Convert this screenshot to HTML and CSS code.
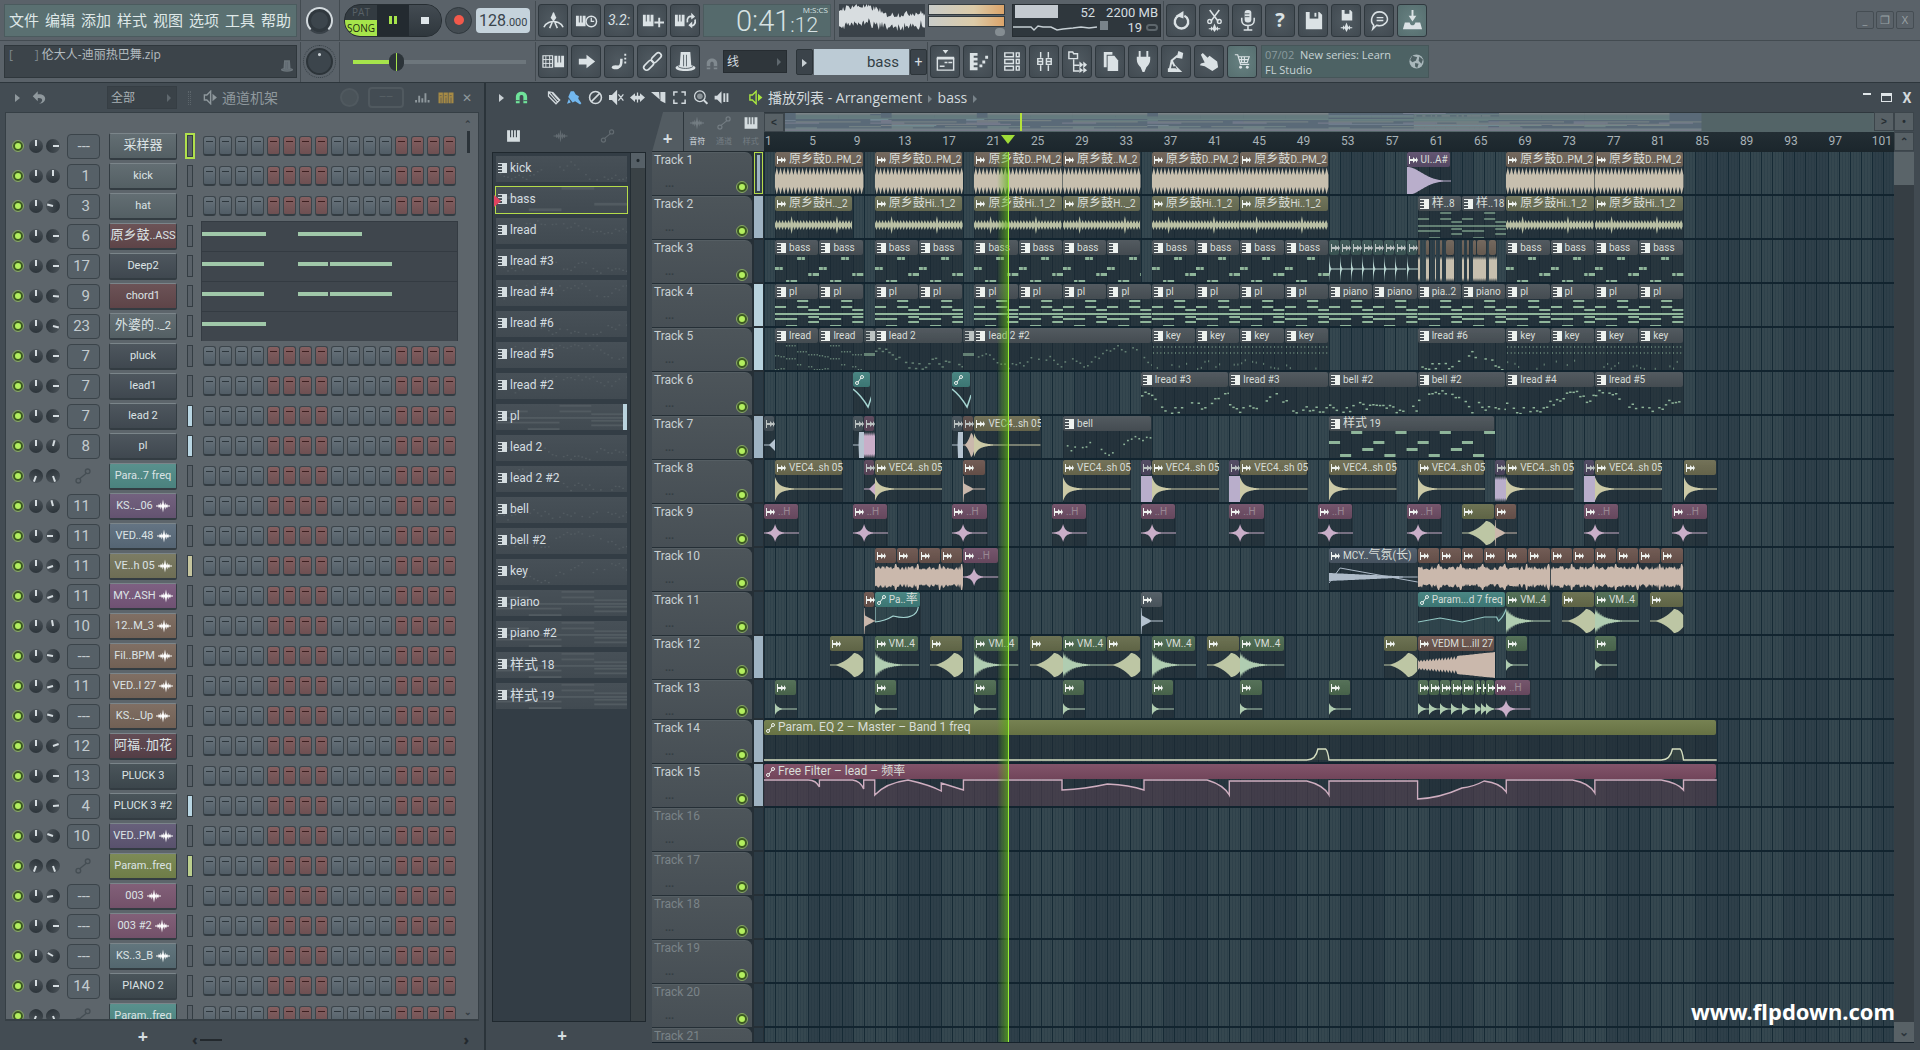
FILE: index.html
```html
<!DOCTYPE html>
<html lang="zh-CN">
<head>
<meta charset="utf-8">
<title>伦大人-迪丽热巴舞.zip</title>
<link rel="stylesheet" href="styles.css">
</head>
<body>
<svg class="defs" aria-hidden="true">
  <symbol id="metro" viewBox="0 0 24 24"><path d="M12 4v9M12 13C10 13 4 14 2 19M12 13c2 0 8 1 10 6M11 13l-3 7M13 13l3 7" fill="none" stroke="currentColor" stroke-width="1.6"/><path d="M9 9l3-6 3 6-3 4z"/></symbol>
  <symbol id="keysclock" viewBox="0 0 24 24"><path d="M1 7h3v7h1V7h2v7h1V7h3v11H1z"/><circle cx="17" cy="13" r="5.500" fill="none" stroke="currentColor" stroke-width="1.5"/><path d="M17 9v4h3" fill="none" stroke="currentColor" stroke-width="1.300"/></symbol>
  <symbol id="keysplus" viewBox="0 0 24 24"><path d="M2 6h3v7h1V6h3v7h1V6h3v12H2zM18 9h2v4h4v2h-4v4h-2v-4h-4v-2h4z"/></symbol>
  <symbol id="keysloop" viewBox="0 0 24 24"><path d="M1 6h3v7h1V6h2v7h1V6h3v12H1z"/><path d="M14 14c-1-5 2-7 5-6m3 3c1 5-2 7-5 6" fill="none" stroke="currentColor" stroke-width="1.8"/><path d="M18 4l4 4-4 3zM19 20l-4-3 4-4z"/></symbol>
  <symbol id="typing" viewBox="0 0 24 24"><path d="M1 6h10v12H1z" fill="none" stroke="currentColor" stroke-width="1.3"/><path d="M1 10h10M1 14h10M4 6v12M8 6v12" stroke="currentColor"/><path d="M13 6h3v7h1V6h2v7h1V6h3v12H13z"/></symbol>
  <symbol id="arrow" viewBox="0 0 24 24"><path d="M4 9h8V5l9 7-9 7v-4H4z"/></symbol>
  <symbol id="slide" viewBox="0 0 24 24"><ellipse cx="8" cy="18" rx="4" ry="2.200"/><path d="M9 18c5 0 5-4 5-9" fill="none" stroke="currentColor" stroke-width="2.600"/><path d="M18 4v10" stroke="currentColor" stroke-width="2" stroke-dasharray="2 2"/></symbol>
  <symbol id="link" viewBox="0 0 24 24"><g fill="none" stroke="currentColor" stroke-width="1.700"><rect x="10" y="5" width="12" height="6" rx="3" transform="rotate(-45 16 8)"/><rect x="2" y="13" width="12" height="6" rx="3" transform="rotate(-45 8 16)"/></g></symbol>
  <symbol id="hat" viewBox="0 0 24 24"><path d="M7 2h10l1 14c7 1 6 6-6 6S-1 17 6 16z"/><path d="M10 5v12M13 5v12M4 17c3 3 13 3 16 0" fill="none" stroke="#59636a"/></symbol>
  <symbol id="magnet" viewBox="0 0 24 24"><path d="M3 21V11C3 0 21 0 21 11v10h-6V11c0-4-6-4-6 0v10z"/><path d="M3 17h6M15 17h6" stroke="#434c53" stroke-width="1.500"/></symbol>
  <symbol id="plist" viewBox="0 0 24 24"><path d="M9 0h6l-3 4zM3 7h18v3H3z"/><path d="M3.500 8v13h17V8M6 17h5M11 13h3M15 13h4" fill="none" stroke="currentColor" stroke-width="1.500"/></symbol>
  <symbol id="proll" viewBox="0 0 24 24"><path d="M3 3h8v3H7v2h4v3H7v2h4v3H7v2h4v3H3zM13 15h3v3h-3zM16 11h3v3h-3zM19 6h3v3h-3z"/></symbol>
  <symbol id="crack" viewBox="0 0 24 24"><path d="M5 3h9v4H5zM5 10h9v4H5zM5 17h9v4H5zM17 3h3v4h-3zM17 10h3v4h-3zM17 17h3v4h-3z" fill="none" stroke="currentColor" stroke-width="1.500"/></symbol>
  <symbol id="mixer" viewBox="0 0 24 24"><path d="M8 2v6M8 16v6M16 2v6M16 16v6M5 9h5v6H5zM14 9h5v6h-5zM5 12h5M14 12h5" fill="none" stroke="currentColor" stroke-width="1.500"/></symbol>
  <symbol id="browser" viewBox="0 0 24 24"><path d="M3 2h4l1 2h4v5H3zM8 10v12h6M8 16h6" fill="none" stroke="currentColor" stroke-width="1.500"/><path d="M14 12v7l4-3.500zM14 18v6l4-3zM18 12v7l4-3.500zM18 18v6l4-3z"/></symbol>
  <symbol id="copy" viewBox="0 0 24 24"><path d="M5 2h9v3H8v13H5z"/><path d="M9 6h7l4 5v11H9z"/></symbol>
  <symbol id="plug" viewBox="0 0 24 24"><path d="M7 1h2v6h6V1h2v6h2v3c0 4-2 6-4 8l-2 5h-2l-2-5c-2-2-4-4-4-8V7h2z"/></symbol>
  <symbol id="robot" viewBox="0 0 24 24"><path d="M13 6L7 11l3 6M7 11L5 20" fill="none" stroke="currentColor" stroke-width="2"/><path d="M14 1l5 2-1 6-6-1zM3 19h8l5 4H3zM10 15l8 8h-4z"/></symbol>
  <symbol id="hand" viewBox="0 0 24 24"><path d="M5 3l5 5 2-2 8 6 1 6-6 4-8-5-5-1 1-2 4-1-4-8z"/></symbol>
  <symbol id="cart" viewBox="0 0 24 24"><path d="M4 5h3l3 10h9M7 7h12l-2 6H9M11 7v6M14 7v6M8 10h10" fill="none" stroke="currentColor" stroke-width="1.200"/><circle cx="10" cy="18" r="1.500"/><circle cx="17" cy="18" r="1.500"/></symbol>
  <symbol id="redo" viewBox="0 0 24 24"><path d="M9 7a7 7 0 1 0 6 0" fill="none" stroke="currentColor" stroke-width="2.500"/><path d="M6 7l8-5v8z"/></symbol>
  <symbol id="cut" viewBox="0 0 24 24"><path d="M7 1l9 12M17 1L8 13" stroke="currentColor" stroke-width="1.600"/><g fill="none" stroke="currentColor" stroke-width="1.400"><circle cx="7" cy="13" r="2"/><circle cx="17" cy="13" r="2"/></g><path d="M6 20h2l1-2 1 2 2-5 2 5 1-2 1 2h2v1h-2l-1 2-1-2-2 3-2-3-1 2-1-2H6z"/></symbol>
  <symbol id="mic" viewBox="0 0 24 24"><rect x="9" y="1" width="7" height="13" rx="3"/><path d="M6 9v3c0 7 13 7 13 0V9M12.500 17v4M8 22h9" fill="none" stroke="currentColor" stroke-width="1.600"/><path d="M9 5h5M9 8h5" stroke="#59636a"/></symbol>
  <symbol id="save" viewBox="0 0 24 24"><path d="M4 3h14l3 3v15H4z"/><path d="M8 3v7h9V3" fill="#49545b"/><path d="M13 4h2v4h-2z"/></symbol>
  <symbol id="savenew" viewBox="0 0 24 24"><path d="M7 1h9l2 2v9H7z"/><path d="M10 1v4h5V1" fill="#49545b"/><path d="M6 19h2l1-2 1 2 2-5 2 5 1-2 1 2h2v1h-2l-1 2-1-2-2 4-2-4-1 2-1-2H6z"/></symbol>
  <symbol id="chat" viewBox="0 0 24 24"><path d="M5 21l1-4C1 12 5 3 12 3s11 8 6 12c-3 3-6 3-9 2z" fill="none" stroke="currentColor" stroke-width="1.600"/><path d="M9 9h7M9 12h7" stroke="currentColor" stroke-width="1.500"/></symbol>
  <symbol id="down" viewBox="0 0 24 24"><path d="M11 1h2v6h3l-4 6-4-6h3zM4 14h5c1 4 5 4 6 0h5l2 7H2z"/></symbol>
  <symbol id="globe" viewBox="0 0 24 24"><circle cx="12" cy="12" r="10" fill="#a9b7bb"/><path d="M6 4l7 2-2 5-5 2-3-3zM10 14l5 1-2 6-3-2zM16 5l5 4-2 6-4-4z" fill="#4e6063"/></symbol>
  <symbol id="speaker" viewBox="0 0 24 24"><path d="M3 8h4l6-6v20l-6-6H3z" fill="none" stroke="currentColor" stroke-width="2.200"/><path d="M16 6l7 6-7 6z"/></symbol>
  <symbol id="undo" viewBox="0 0 24 24"><path d="M10 2v5c16-1 15 14 2 15 8-4 6-10-2-9v5L2 10z"/></symbol>
  <symbol id="pencil" viewBox="0 0 24 24"><path d="M4 3l7 1 11 12-6 6L4 10zM4 3l14 16M10 5l11 12" fill="none" stroke="currentColor" stroke-width="2"/></symbol>
  <symbol id="brush" viewBox="0 0 24 24"><path d="M2 11L6 2l5 0 3 5 5 3-1 4 5 7-2 2-8-5-4 2zM3 14l3 6-6 2z"/></symbol>
  <symbol id="no" viewBox="0 0 24 24"><path d="M5 19L19 5" stroke="currentColor" stroke-width="2.500"/><circle cx="12" cy="12" r="9.500" fill="none" stroke="currentColor" stroke-width="2.500"/></symbol>
  <symbol id="mute" viewBox="0 0 24 24"><path d="M1 9h4l7-7v20l-7-7H1zM15 7l8 10M23 7l-8 10" stroke="currentColor" stroke-width="2"/></symbol>
  <symbol id="slip" viewBox="0 0 24 24"><path d="M0 12l8-7v4h8V5l8 7-8 7v-4H8v4zM11 4h2v16h-2z"/></symbol>
  <symbol id="slice" viewBox="0 0 24 24"><path d="M0 3h13l1 12zM15 3h8v18l-8-4z"/></symbol>
  <symbol id="select" viewBox="0 0 24 24"><path d="M3 9V3h6M15 3h6v6M21 15v6h-6M9 21H3v-6" fill="none" stroke="currentColor" stroke-width="2.400"/></symbol>
  <symbol id="lens" viewBox="0 0 24 24"><circle cx="11" cy="10" r="8.500" fill="none" stroke="currentColor" stroke-width="2"/><circle cx="11" cy="10" r="4.500" opacity=".5"/><path d="M17 16l6 6" stroke="currentColor" stroke-width="3"/></symbol>
  <symbol id="playback" viewBox="0 0 24 24"><path d="M1 9h4l7-7v20l-7-7H1zM15 5h3v14h-3zM20 5h3v14h-3z"/></symbol>
  <symbol id="piano" viewBox="0 0 24 24"><path d="M1 2h5v12h2V2h3v12h2V2h3v12h2V2h5v20H1z"/></symbol>
  <symbol id="wave" viewBox="0 0 24 24"><path d="M0 11h4l1-3 2 3 1-5 2 5 2-10 2 10 2-5 1 5 2-3 1 3h4v2h-4l-1 3-2-3-1 5-2-5-2 10-2-10-2 5-1-5-2 3-1-3H0z"/></symbol>
  <symbol id="auto" viewBox="0 0 24 24"><g fill="none" stroke="currentColor" stroke-width="2"><circle cx="5" cy="19" r="3.500"/><circle cx="19" cy="5" r="3.500"/><path d="M7 16L17 8"/></g></symbol>
  <symbol id="levels" viewBox="0 0 24 24"><path d="M1 16h3v4H1zM6 9h3v11H6zM11 13h3v7h-3zM16 5h3v15h-3zM21 16h3v4h-3z"/></symbol>
  <symbol id="rackgrid" viewBox="0 0 24 24"><path d="M0 4h7v17H0zM8 4h7v17H8zM16 4h8v17h-8z"/><path d="M2 9h3M10 9h3M18 9h3M4 12v9M12 12v9M20 12v9" stroke="#434c53"/></symbol>
  <symbol id="c-mid" viewBox="0 0 9 10"><path d="M0 0h9v10H0V9h4V7H0V6h4V4H0V3h4V1H0z"/></symbol>
  <symbol id="c-aud" viewBox="0 0 9 10"><path d="M0 1h1v3h3V2l2 2h1V2l2 3-2 3V6H6L4 8V6H1v3H0z"/></symbol>
  <symbol id="c-aut" viewBox="0 0 9 10"><g fill="none" stroke="currentColor"><circle cx="2" cy="8" r="1.500"/><circle cx="7" cy="2" r="1.500"/><path d="M3 7l3-4"/></g></symbol>
</svg>

<header class="topbar">
  <div class="strip">
    <nav class="menu">
      <button>文件</button><button>编辑</button><button>添加</button><button>样式</button><button>视图</button><button>选项</button><button>工具</button><button>帮助</button>
    </nav>
    <div class="cell"><span class="bigknob main"></span></div>
    <div class="cell transport">
      <div class="deck">
        <button class="mode"><span>PAT</span><b>SONG</b></button>
        <button class="play" aria-label="暂停"><i></i><i></i></button>
        <button class="stop" aria-label="停止"><i></i></button>
      </div>
      <button class="rec" aria-label="录音"><i></i></button>
      <div class="tempo">128<small>.000</small></div>
    </div>
    <div class="tools">
      <button class="tb"><svg><use href="#metro"/></svg></button>
      <button class="tb"><svg><use href="#keysclock"/></svg></button>
      <button class="tb count">3.2:</button>
      <button class="tb"><svg><use href="#keysplus"/></svg></button>
      <button class="tb"><svg><use href="#keysloop"/></svg></button>
    </div>
    <div class="time"><span class="big">0:41</span><div><span class="unit">M:S:CS</span><span class="cs">:12</span></div></div>
    <div class="cell scope">
      <svg id="scope" viewBox="0 0 84 32" preserveAspectRatio="none"></svg>
      <div class="meters"><i></i><i></i><span></span></div>
    </div>
    <div class="cpu">
      <div class="load"><i></i><span>52</span></div>
      <div class="mem">2200 MB</div>
      <div class="line"><svg viewBox="0 0 84 16"><path d="M0 7h18l3 3 4-4 5 1 8 0 6 3 6-1 10-1 8-1 8 1 8-1" fill="none" stroke="#c6cfd4" stroke-width="1.400"/></svg></div>
      <div class="poly"><b></b>19 <i></i></div>
    </div>
    <div class="tools late">
      <button class="tb"><svg><use href="#redo"/></svg></button>
      <button class="tb"><svg><use href="#cut"/></svg></button>
      <button class="tb"><svg><use href="#mic"/></svg></button>
      <button class="tb ask">?</button>
      <button class="tb"><svg><use href="#save"/></svg></button>
      <button class="tb"><svg><use href="#savenew"/></svg></button>
      <button class="tb"><svg><use href="#chat"/></svg></button>
      <button class="tb lit"><svg><use href="#down"/></svg></button>
    </div>
    <div class="winbtns"><button>_</button><button>❐</button><button>X</button></div>
  </div>
  <div class="strip">
    <div class="hint"><span>[&nbsp;&nbsp;&nbsp;&nbsp;&nbsp;&nbsp;&nbsp;] </span>伦大人-迪丽热巴舞.zip<svg><use href="#hat"/></svg></div>
    <div class="cell"><span class="bigknob dotted"></span></div>
    <div class="cell slider"><input type="range" min="0" max="100" value="23" aria-label="音高"></div>
    <div class="tools">
      <button class="tb"><svg><use href="#typing"/></svg></button>
      <button class="tb"><svg><use href="#arrow"/></svg></button>
      <button class="tb"><svg><use href="#slide"/></svg></button>
      <button class="tb"><svg><use href="#link"/></svg></button>
      <button class="tb"><svg><use href="#hat"/></svg></button>
    </div>
    <div class="snap">
      <svg><use href="#magnet"/></svg>
      <div class="pick"><select aria-label="吸附"><option>线</option></select></div>
      <div class="pattern"><button class="open" aria-label="样式列表"></button><input type="text" value="bass" aria-label="样式"><button>+</button></div>
    </div>
    <div class="tools views">
      <button class="tb"><svg><use href="#plist"/></svg></button>
      <button class="tb"><svg><use href="#proll"/></svg></button>
      <button class="tb"><svg><use href="#crack"/></svg></button>
      <button class="tb"><svg><use href="#mixer"/></svg></button>
      <button class="tb"><svg><use href="#browser"/></svg></button>
      <button class="tb"><svg><use href="#copy"/></svg></button>
      <button class="tb"><svg><use href="#plug"/></svg></button>
      <button class="tb"><svg><use href="#robot"/></svg></button>
      <button class="tb"><svg><use href="#hand"/></svg></button>
      <button class="tb lit"><svg><use href="#cart"/></svg></button>
    </div>
    <div class="news"><p><span>07/02</span> New series: Learn<br>FL Studio</p><svg><use href="#globe"/></svg></div>
  </div>
</header>

<main class="desk">
  <section class="rack">
    <div class="titlebar">
      <button class="tri" aria-label="菜单"></button>
      <svg class="ic"><use href="#undo"/></svg>
      <div class="pick filter"><select aria-label="过滤"><option>全部</option></select></div>
      <span class="grip"></span>
      <svg class="ic"><use href="#speaker"/></svg>
      <h2>通道机架</h2>
      <span class="swing"></span><span class="slot">——</span>
      <svg class="ic"><use href="#levels"/></svg>
      <svg class="ic gold"><use href="#rackgrid"/></svg>
      <button class="close">✕</button>
    </div>
    <div class="rackbody">
      <div id="channels"></div>
      <div class="vthumb"><b>⌃</b><i></i><b class="end">⌄</b></div>
    </div>
    <div class="rackfoot"><button>+</button><div class="hbar"><b>‹</b><i></i><b class="end">›</b></div></div>
  </section>

  <section class="playlist">
    <div class="titlebar">
      <button class="tri" aria-label="菜单"></button>
      <svg class="ic green"><use href="#magnet"/></svg>
      <div class="pens">
        <svg><use href="#pencil"/></svg><svg class="blue"><use href="#brush"/></svg><svg><use href="#no"/></svg><svg><use href="#mute"/></svg><svg><use href="#slip"/></svg><svg><use href="#slice"/></svg><svg><use href="#select"/></svg><svg><use href="#lens"/></svg><svg><use href="#playback"/></svg>
      </div>
      <svg class="ic lime"><use href="#speaker"/></svg>
      <h1>播放列表 - Arrangement <i></i> bass <i></i></h1>
      <div class="wins"><button aria-label="最小化" class="min"></button><button aria-label="最大化" class="max"></button><button class="x">X</button></div>
    </div>
    <div class="work">
      <aside class="picker">
        <div class="tabs"><svg><use href="#piano"/></svg><svg class="off"><use href="#wave"/></svg><svg class="off"><use href="#auto"/></svg></div>
        <div class="listbox"><ul id="patterns"></ul><div class="pscroll"><i></i></div></div>
        <button class="add">+</button>
      </aside>
      <div class="arr">
        <div class="arrtop">
          <div class="corner">
            <button class="add">+</button>
            <div class="modes">
              <svg class="off"><use href="#wave"/></svg><svg class="off"><use href="#auto"/></svg><svg><use href="#piano"/></svg>
              <span>音符</span><span class="off">通道</span><span class="off">样式</span>
            </div>
          </div>
          <div class="over">
            <div class="mapline"><button>&lt;</button><div class="map" id="map"></div></div>
            <div class="ruler" id="ruler"></div>
          </div>
          <div class="endcol"><div><button>&gt;</button><button>•</button></div><button>⌃</button></div>
        </div>
        <div class="arrbody">
          <div class="heads" id="heads"></div>
          <div class="lanes"><div class="bars" id="bars"></div><div id="lanes"></div><div class="playhead"></div></div>
          <div class="vscroll"><i></i><button>⌄</button></div>
          <span class="mark">www.flpdown.com</span>
        </div>
      </div>
    </div>
  </section>
</main>
<script src="script.js"></script>
</body>
</html>
```
FILE: styles.css
```css
*{box-sizing:border-box}
:root{--ui:Roboto,"Noto Sans CJK SC",sans-serif;--text:"Open Sans","Noto Sans CJK SC",sans-serif}
body{margin:0;height:100vh;display:flex;flex-direction:column;overflow:hidden;background:#3c464e;color:#d5dde0;font:12px/16px var(--ui)}
button,input,select{font:inherit;color:inherit;border:0;padding:0;margin:0;background:none}
svg{fill:currentColor;flex:none;display:block}
h1,h2,p,ul{margin:0;padding:0;font-weight:400;list-style:none}
.defs{width:0;height:0;position:absolute}

/* top toolbars */
.topbar{background:#5a6269;border-bottom:1px solid #2d363c}
.strip{display:flex;height:41px;align-items:center;border-bottom:1px solid #434b51}
.strip:last-child{border-bottom:0}
.menu{width:293px;height:33px;margin:0 3px 0 4px;background:#5a7071;border:1px solid #4b5b5e;display:flex;gap:6px;padding-left:4px;align-items:center;font:15px/30px var(--text);color:#dfe8e8}
.menu button{width:30px;white-space:nowrap}
.hint{width:293px;height:33px;margin:0 3px 0 4px;background:#3c444a;border:1px solid #2f373c;padding:0 4px;font:12px/18px var(--text);color:#b4bcc0;position:relative}
.hint span{color:#7c868c}
.hint svg{position:absolute;right:2px;bottom:2px;width:14px;height:18px;color:#6b757b}
.cell{height:40px;border-left:1px solid #434b51;display:flex;align-items:center}
.bigknob{width:27px;height:27px;border-radius:50%;margin:0 6px 0 5px;background:#3c454c;border:2px solid #2c3439}
.bigknob.main{border-color:#d3dade #d3dade #3a4249;box-shadow:inset 0 0 0 3px #30383e}
.bigknob.dotted{outline:1px dotted #363f45;outline-offset:2px;background:radial-gradient(circle at 50% 20%,#c9d0d4 1px,#3c454c 2px)}
.transport{width:196px;padding-left:4px}
.deck{display:flex;width:98px;height:33px;border-radius:16px;overflow:hidden;border:1px solid #262d32;background:#333b41}
.deck button{flex:1}
.mode{display:flex;flex-direction:column;font:10px/15px var(--text);color:#596167}
.mode span,.mode b{width:100%;font-weight:400}
.mode b{background:#a6e44b;color:#1d2a12;line-height:16px}
.play{background:#232a30;display:flex;justify-content:center;align-items:center;gap:2px}
.play i{width:3px;height:8px;background:#a6e44b}
.stop{display:flex;justify-content:center;align-items:center;background:linear-gradient(#434b52,#2f373d)}
.stop i{width:8px;height:7px;background:#dfe6ea}
.rec{width:27px;height:27px;border-radius:50%;background:#434b51;border:1px solid #2f373d;margin:0 4px 0 3px;display:flex;align-items:center;justify-content:center}
.rec i{width:10px;height:10px;border-radius:50%;background:#f2594b}
.tempo{width:54px;height:25px;border-radius:4px;background:#c5d3dc;color:#39444b;font-size:16px;line-height:25px;padding-left:3px;white-space:nowrap}
.tempo small{font-size:11px}
.tools{display:flex;gap:3px;border-left:1px solid #434b51;padding:3px 3px 3px 2px}
.tb{width:30px;height:33px;border:1px solid #2f383e;border-radius:3px;background:radial-gradient(#505a61,#414a51);display:flex;align-items:center;justify-content:center;color:#dbe2e5}
.tb svg{width:23px;height:23px}
.tb.lit{background:radial-gradient(#678181,#566e6f)}
.tb.count{font:italic 14px/20px var(--ui)}
.tb.ask{font:bold 20px/24px var(--text)}
.time{width:128px;height:33px;background:#556a6c;border:1px solid #4b5b5e;display:flex;padding-left:32px;color:#d7e2e3;margin-right:3px}
.time .big{font:300 29px/32px var(--ui)}
.time div{display:flex;flex-direction:column;flex:1}
.time .cs{font:300 21px/20px var(--ui)}
.unit{font:8px/10px var(--text);text-align:right;padding-right:2px}
.scope{padding-left:4px;gap:3px}
.scope svg{width:86px;height:33px;background:#3a4249;color:#d8dde0}
.meters{width:77px;height:33px;display:flex;flex-direction:column;gap:1px}
.meters i{height:11px;border:1px solid #333b40;background:linear-gradient(90deg,#c9ccc9,#dccba8 60%,#dca46a)}
.meters span{width:10px;height:8px;border-radius:5px;background:#858d92;align-self:flex-end}
.cpu{width:149px;height:33px;margin-left:7px;background:#2f373d;border:1px solid #262d32;display:grid;grid-template-columns:84px 1fr;font-size:13px;line-height:15px;text-align:right;white-space:nowrap}
.load{display:flex;justify-content:space-between;padding:0 2px}
.load i{width:43px;height:13px;background:#c4cad0}
.line svg{width:84px;height:16px}
.mem{padding-right:2px}
.poly{padding:0 2px 0 3px;display:flex;align-items:center;gap:4px}
.poly b{width:8px;height:9px;background:#79838a;margin:0 auto 5px 0}
.poly i{width:12px;height:7px;border:2px solid #5d666c;border-radius:4px}
.late{margin-left:2px}
.winbtns{margin-left:auto;margin-right:6px;display:flex;gap:2px;color:#9aa2a7}
.winbtns button{width:18px;height:18px;border:1px solid #454d53;border-radius:2px;font:11px/16px var(--text)}
.slider{width:196px;padding:0 9px 0 13px}
.slider input{appearance:none;width:100%;height:22px;background:linear-gradient(90deg,#a6e44b 26%,#6d767c 26%) center/100% 4px no-repeat}
.slider input::-webkit-slider-thumb{appearance:none;width:15px;height:18px;border-radius:8px;background:linear-gradient(90deg,#2c3439 45%,#a6e44b 45% 55%,#2c3439 55%)}
.snap{display:flex;align-items:center;width:224px}
.snap>svg{width:14px;height:16px;margin:4px 4px 0 2px;color:#80898f}
.pick{background:#2f363b;border:1px solid #262c31;height:23px;width:64px;position:relative}
.pick::after{content:"";position:absolute;right:5px;top:7px;border:4px solid transparent;border-left:4px solid #5f686e;border-right:0}
.pick select{appearance:none;width:100%;height:100%;padding-left:3px;font:12px/20px var(--text)}
.pattern{display:flex;margin-left:9px;gap:1px;height:26px;flex:1}
.pattern button{width:17px;background:#3b434a;border:1px solid #2c3439;border-radius:2px;font-size:14px}
.pattern .open::after,.tri::after{content:"";display:inline-block;border:4px solid transparent;border-left:5px solid #c9d0d4;border-right:0}
.pattern input{flex:1;width:20px;background:#bccbd5;color:#333e45;text-align:right;padding-right:10px;font-size:15px}
.news{width:168px;height:33px;background:#4d6264;border:1px solid #465659;margin-left:1px;display:flex;justify-content:space-between;align-items:center;padding:0 3px;font:11px/15px var(--text);color:#c8d4d5;white-space:nowrap}
.news span{color:#8b9b9e;padding-right:3px}
.news svg{width:17px;height:17px}

/* window frames */
.desk{flex:1;min-height:0;display:flex}
.rack{width:486px;flex:none;display:flex;flex-direction:column;border-right:2px solid #2b343a;background:#434c53;padding:0 5px 0 5px}
.playlist{flex:1;min-width:0;display:flex;flex-direction:column;background:#414a51}
.titlebar{height:29px;flex:none;display:flex;align-items:center;color:#d3dade}
.titlebar .ic{width:15px;height:15px}
.titlebar h1,.titlebar h2{font:14px/20px var(--text)}
.tri{width:12px;height:16px}
.rack .titlebar{color:#8f989d;padding-left:6px}
.rack .titlebar .tri::after{border-left-color:#8f989d}
.rack .titlebar .ic{width:16px}
.rack .titlebar>:nth-child(2){margin-left:8px}
.rack h2{margin-left:4px;width:118px;white-space:nowrap}
.filter{width:70px;margin-left:60px;background:#3a4248;border-color:#363e44;color:#a8b0b4}
.grip{width:3px;height:14px;border:1px dotted #5c656b;border-width:0 1px;margin:0 11px}
.swing{width:19px;height:19px;border-radius:50%;border:2px solid #50595f;background:#4a5359}
.slot{width:36px;height:21px;border:2px solid #50595f;border-radius:4px;margin:0 10px 0 9px;font-size:9px;line-height:16px;text-align:center;color:#5b6469}
.rack .titlebar .gold{color:#a68a45;margin-left:8px}
.close{width:16px;font-size:12px;margin-left:auto;margin-right:4px}

/* channel rack */
.rackbody{flex:1;min-height:0;background:#5d656b;border:1px solid #363f45;border-bottom-width:2px;display:flex;justify-content:space-between;overflow:hidden}
#channels{padding-top:18px}
.ch{display:flex;align-items:center;height:30px;padding-left:7px}
.led{appearance:none;width:10px;height:10px;border-radius:50%;background:#b3ee5f;border:2px solid #3c5a20;outline:1px solid #86a860}
.kn{width:14px;height:14px;border-radius:50%;background:linear-gradient(#4a5258,#2c343a);margin-left:3px;display:flex;justify-content:center;transform:rotate(var(--r))}
.kn::after{content:"";width:2px;height:6px;background:#d5dce0;margin-top:1px}
.led+.kn{margin-left:6px}
.num{width:33px;height:25px;margin:0 9px 0 7px;border:1px solid #3b444a;border-radius:4px;background:#566067;font-size:15px;line-height:23px;text-align:right;padding-right:9px;color:#c3cbcf}
.num.auto{border:0;background:none;color:#454e54;padding:4px 0 0 8px}
.num svg{width:16px;height:16px}
.name{width:68px;height:27px;border:1px solid #333c42;border-top-color:#7b858a;border-bottom-width:2px;border-radius:2px;background:linear-gradient(rgba(255,255,255,.06),rgba(0,0,0,.06)),var(--c);color:#dce3e5;font-size:11px;white-space:nowrap;display:flex;align-items:center;justify-content:center;gap:3px}
.name svg{width:14px;height:14px;color:#fff}
.cj{font-size:12px}
.name .cj{font-size:13px}
.sel{width:6px;height:22px;border:1px solid #343d43;background:var(--k,#596168);margin:0 10px;flex:none}
.sel.on{outline:2px solid #b0e04c}
.steps{display:flex;gap:3px}
.steps input{appearance:none;width:13px;height:20px;border-radius:3px;border:1px solid #3b444a;border-bottom:2px solid #333c42;background:linear-gradient(#2d363c,#2d363c) center 4px/7px 1px no-repeat,linear-gradient(#69747c,#515d66)}
.steps input.r{background:linear-gradient(#3c1f20,#3c1f20) center 4px/7px 1px no-repeat,linear-gradient(#855f60,#6d5052)}
.roll{width:257px;height:30px;margin-left:-2px;background:#3f464d;border:1px solid #343b42;border-bottom:0}
.roll svg{width:100%;height:29px}
.vthumb{width:20px;display:flex;flex-direction:column;align-items:center;color:#343c42;padding-top:4px;font:bold 9px/14px sans-serif}
.vthumb i{width:3px;height:22px;background:#2b3339}
.vthumb .end{margin-top:auto}
.rackfoot{height:29px;display:flex;align-items:center;padding-left:129px;font:bold 18px/20px var(--text)}
.rackfoot button{width:18px}
.hbar{flex:1;display:flex;align-items:center;margin:8px 10px 0 40px;color:#23292e;font-size:14px}
.hbar i{width:22px;height:2px;background:#23292e;margin-left:2px}
.hbar .end{margin-left:auto}

/* playlist title */
.playlist>.titlebar{padding-left:9px}
.playlist .green{color:#6fe39a;margin-left:7px}
.pens{display:flex;gap:6px;margin:0 19px 0 17px}
.pens svg{width:15px;height:15px}
.pens .blue{color:#72b7ee}
.lime{color:#a9e63f;margin-right:5px}
h1 i{display:inline-block;border:4px solid transparent;border-left:4px solid #79838a;border-right:0;margin:0 2px}
.wins{margin-left:auto;display:flex;gap:9px;padding-right:7px;align-items:center}
.wins .min{width:8px;height:2px;background:#dfe5e8;margin:0 1px 8px 0}
.wins .max{width:11px;height:9px;border:1px solid #dfe5e8;border-top-width:3px}
.wins .x{font:bold 14px/14px var(--ui);width:12px}

/* pattern picker */
.work{flex:1;min-height:0;display:flex}
.picker{width:166px;flex:none;padding:0 6px;display:flex;flex-direction:column}
.tabs{height:40px;display:flex;gap:30px;align-items:center;padding:8px 0 0 13px}
.tabs svg{width:17px;height:14px}
.off{color:#626b71}
.listbox{flex:1;min-height:0;display:flex;border:1px solid #1f282e;background:#333d45}
#patterns{flex:1;min-width:0;padding:3px 3px 0;display:flex;flex-direction:column;gap:5px}
#patterns li{height:26px;flex:none;background:linear-gradient(#475057,#414a51);display:flex;align-items:center;gap:3px;padding:0 0 2px 2px;font-size:12px;position:relative;white-space:nowrap}
#patterns li svg.i{width:9px;height:10px}
#patterns li svg.n{position:absolute;inset:0;width:100%;height:100%;fill:#525b61}
#patterns li span,#patterns li svg.i{position:relative}
#patterns li .cj{font-size:14px}
#patterns li.cur{outline:1px solid #b5dc4a}
#patterns li.cur::before{content:"";position:absolute;left:-2px;top:8px;border:6px solid transparent;border-left:7px solid #e0435f;border-right:0;z-index:1}
#patterns li.tag{border-right:4px solid #b9d3de}
.pscroll{width:15px;background:#3a4246;border-left:1px solid #242d33}
.pscroll i{display:block;height:15px;background:radial-gradient(#1f272c 1px,#566067 2px)}
.add{font:bold 17px/20px var(--text)}
.picker .add{height:28px;padding-right:14px}

/* arrangement */
.arr{flex:1;min-width:0;display:flex;flex-direction:column;margin-bottom:7px;margin-right:6px}
.arrtop{height:40px;flex:none;display:flex}
.corner{width:112px;flex:none;background:#535c62;clip-path:polygon(11px 0,100% 0,100% 100%,0 100%);display:flex;border-bottom:1px solid #232c32}
.corner .add{width:32px;padding-top:14px;border-right:1px solid #2d363c}
.modes{flex:1;display:grid;grid-template-columns:repeat(3,1fr);justify-items:center;align-items:center;font-size:8px;line-height:10px}
.modes svg{width:18px;height:14px}
.modes .off{color:#747d83}
.over{flex:1;min-width:0}
.mapline{height:20px;display:flex;background:#556568;border-top:1px solid #2f383e}
.mapline button,.endcol button{width:20px;height:19px;background:#586166;border:1px solid #3c454b;color:#262e33;font:bold 10px/14px sans-serif}
.map{flex:1;position:relative;margin-right:22px;border-left:1px solid #3c454b;background:#536467}
.map svg{width:100%;height:18px}
.map::after{content:"";position:absolute;left:21.600%;top:0;width:2px;height:18px;background:#b5e23a}
.ruler{height:20px;background:linear-gradient(#232e34,#1b262c);display:flex;position:relative;overflow:hidden}
.ruler span{flex:none;width:calc(400% / 102);padding-left:1px;line-height:19px;font-size:12px;color:#a9b3b8;white-space:nowrap}
.ruler span:last-child{width:calc(200% / 102);padding:0}
.ruler::after{content:"";position:absolute;left:calc(2200% / 102 - 7px);top:3px;border:7px solid transparent;border-top:9px solid #a0dc38;border-bottom:0}
.endcol{width:20px;flex:none;height:40px}
.endcol div{display:flex;height:20px;margin-left:-20px}
.arrbody{flex:1;min-height:0;display:flex;position:relative;overflow:hidden;border-bottom:1px solid #16222b}
.heads{width:112px;flex:none;background:#252f36;overflow:hidden}
.hd{height:44px;display:flex;padding-bottom:1px}
.hd div{width:100px;background:linear-gradient(#4d555a,#474f55);border-top:1px solid #555e63;border-radius:0 7px 0 0;line-height:15px;padding-left:2px;display:flex;justify-content:space-between;color:#c8d0d3}
.hd .led{align-self:flex-end;margin:0 5px 3px}
.hd label{display:block}
.hd small{display:block;font:bold 11px/12px sans-serif;color:#353e44;padding:9px 0 0 11px}
.hd.dim label{color:#7a8388}
.hd i{width:9px;margin:0 0 1px 2px;background:var(--k,#2b3a44)}
.hd.cur i{outline:1px solid #b5dc4a;outline-offset:-1px;border:3px solid #33414a}
.lanes{flex:1;min-width:0;position:relative;background:#2f404a;overflow:hidden}
.bars{position:absolute;inset:0;display:flex}
.bars i{flex:1;border-left:1px solid #162a35;background:repeating-linear-gradient(90deg,transparent 0 2px,rgba(20,40,52,.18) 2px 3px),#2e3f49}
.bars i:nth-child(8n+1),.bars i:nth-child(8n+2),.bars i:nth-child(8n+3),.bars i:nth-child(8n+4){background-color:#35474f}
.lane{height:44px;position:relative;border-bottom:2px solid #12242f}
.h40{height:40px}
.clip{position:absolute;top:0;bottom:0;left:calc(var(--s) * 100% / 102);width:calc(var(--l) * 100% / 102);overflow:hidden;background:rgba(32,44,52,.6)}
.clip header{height:15px;margin-right:1px;background:linear-gradient(rgba(255,255,255,.05),rgba(0,0,0,.08)),var(--h);border-radius:2px;display:flex;align-items:center;gap:3px;padding-left:2px;font-size:10px;line-height:15px;color:#d8ddd8;white-space:nowrap}
.clip header svg{width:9px;height:10px;color:#eef2ef}
.clip>svg{width:100%;height:28px;fill:var(--w)}
.clip.wide header{font-size:12px}
.clip.dim header{opacity:.75}
.clip.h header span{opacity:.4}
.clip.fade>svg{opacity:.6}
.playhead{position:absolute;top:0;bottom:0;left:calc(2200% / 102 - 11px);width:12px;background:linear-gradient(90deg,rgba(95,180,20,0),rgba(95,180,20,.65));border-right:1px solid #9cf03a}
.vscroll{width:20px;display:flex;flex-direction:column;justify-content:space-between;background:#363e44}
.vscroll i{height:33px;background:#5a6469}
.vscroll button{height:20px;background:#586166;color:#2c353b;font:bold 12px/16px sans-serif}
.mark{position:absolute;right:19px;bottom:14px;font:bold 22px/34px "Noto Sans",sans-serif;color:#fff}
```
FILE: script.js
```js
const $ = id => document.getElementById(id);
let seed = 7;
const rnd = () => (seed = (seed * 16807) % 2147483647) / 2147483647;
const icon = (n, c = '') => `<svg class="${c}"><use href="#${n}"/></svg>`;
const text = s => s.replace(/[一-龥]+/g, m => `<span class="cj">${m}</span>`);

/* channel rack: name, mixer track, colour, kind, right knob angle, selector colour */
const G = '#59656a', D = '#434c54', R = '#63484c', T = '#4f8a86', P = '#6a5877', B = '#5a6b7b', O = '#74745a', M = '#76567a', W = '#78665a', V = '#5e5673', L = '#75844c', K = '#7a5670';
const channels = [
  ['采样器', '---', G, '', 90, 'on'], ['kick', 1, G, '', 0], ['hat', 3, G, '', -75],
  ['原乡鼓..ASS', 6, R, 'roll', 90], ['Deep2', 17, D, 'roll', 90], ['chord1', 9, R, 'roll', 95], ['外婆的.._2', 23, G, 'roll', 105],
  ['pluck', 7, D, '', 90], ['lead1', 7, D, '', 90], ['lead 2', 7, D, '', 90, '#b9d6e3'], ['pl', 8, D, '', 15, '#b9d6e3'],
  ['Para..7 freq', 'a', T, '', 160], ['KS.._06', 11, P, 'w', -15], ['VED..48', 11, B, 'w', -90], ['VE..h 05', 11, O, 'w', -110, '#c6c59e'],
  ['MY..ASH', 11, M, 'w', -110], ['12..M_3', 10, W, 'w', -10], ['Fil..BPM', '---', W, 'w', -80], ['VED..l 27', 11, W, 'w', -105],
  ['KS.._Up', '---', W, 'w', -75], ['阿福..加花', 12, '#59414a', '', 70], ['PLUCK 3', 13, '#3f4a50', '', 90], ['PLUCK 3 #2', 4, '#3f4a50', '', 85, '#b9d6e3'],
  ['VED..PM', 10, V, 'w', -70], ['Param..freq', 'a', L, '', 160, '#bccf8e'], ['003', '---', K, 'w', -100], ['003 #2', '---', K, 'w', 90],
  ['KS..3_B', '---', '#586d75', 'w', -60], ['PIANO 2', 14, '#3f4a50', '', 90], ['Param..freq', 'a', T, '', 160]
];
const rolls = [[[0, 64], [96, 64]], [[0, 62], [96, 30], [128, 62]], [[0, 62], [96, 30], [128, 62]], [[0, 64]]];
let rollIndex = 0;
$('channels').innerHTML = channels.map(([name, num, c, kind, rot, k]) => {
  const auto = num === 'a';
  const right = kind === 'roll'
    ? `<div class="roll"><svg>${rolls[rollIndex++].map(([x, w]) => `<rect x="${x}" y="10" width="${w}" height="4" fill="#a0c8a9"/>`).join('')}</svg></div>`
    : `<div class="steps">${Array.from({length: 16}, (_, i) => `<input type="checkbox" aria-label="${name} ${i + 1}"${i % 8 > 3 ? ' class="r"' : ''}>`).join('')}</div>`;
  return `<div class="ch"><input class="led" type="checkbox" aria-label="${name}"><i class="kn" style="--r:${auto ? 200 : 0}deg"></i><i class="kn" style="--r:${rot}deg"></i>
  <span class="num${auto ? ' auto' : ''}">${auto ? icon('auto') : num}</span>
  <button class="name" style="--c:${c}"><span>${text(name)}</span>${kind === 'w' ? icon('wave') : ''}</button>
  <i class="sel${k === 'on' ? ' on' : ''}"${k && k !== 'on' ? ` style="--k:${k}"` : ''}></i>${right}</div>`;
}).join('');

/* note and waveform drawings; one bar is 11 units wide, the body 28 high */
const BAR = 11;
const rect = (x, y, w, h = 3) => `<rect x="${x * BAR}" y="${y}" width="${w * BAR}" height="${h}"/>`;
const tile = (list, len, h) => {
  let s = '';
  for (let b = 0; b < len; b += 4) list.forEach(([x, y, w]) => s += rect(b + x, y, w, h));
  return s;
};
const walk = (len, step, w, depth) => {
  let s = '', y = 14;
  for (let x = 0; x < len; x += step) {
    y += (rnd() - .5) * depth;
    y = y < 2 ? 6 : y > 26 ? 20 : y;
    if (rnd() > .2) s += rect(x, y.toFixed(1), w, 1.5);
  }
  return s;
};
const notes = {
  bass: l => tile([[0, 12, .35], [.4, 12, .3], [1, 25, .3], [1.4, 25, .6], [2, 2, .35], [2.4, 2, .3], [3, 18, .3], [3.4, 18, .6]], l),
  pl: l => tile([[2, 1, 1], [0, 7, 1], [2, 7, 1], [3, 10, 1], [0, 14, 4], [0, 19, 2], [3, 17, 1], [3, 22, 1], [1, 26, 1]], l, 2),
  arp: l => { let s = ''; for (let b = 0; b < l; b += 4) [[0, 12], [.5, 13], [1, 2], [1.5, 2], [1, 15], [1.5, 15], [0, 26], [.5, 25], [2, 8], [2.5, 8], [2, 21], [3, 11], [3.5, 11], [3, 23], [3.5, 26]].forEach(([x, y]) => s += rect(b + x, y, .12, 1.5) + rect(b + x + .25, y, .12, 1.5)); return s; },
  dots: l => walk(l, .3, .22, 13),
  soft: l => walk(l, .34, .16, 10),
  key: l => { let s = ''; for (let x = .1; x < l; x += .33) { s += rect(x, 3, .08, 2) + rect(x, 9, .08, 2); if (rnd() > .5) s += rect(x, 16 + rnd() * 9, .1, 2); } return s; },
  slow: l => tile([[0, 10, 1], [1, 23, 1], [2, 0, 1], [3, 17, 1]], l)
};
const shape = (len, step, amp) => {
  const w = len * BAR, top = [], low = [];
  let i = 0;
  for (let x = 0; x <= w + .01; x += step, i++) {
    const a = Math.max(.6, amp(x, i, w));
    top.push(`${x.toFixed(1)},${(14 - a).toFixed(1)}`);
    low.unshift(`${x.toFixed(1)},${(14 + a).toFixed(1)}`);
  }
  return `<polygon points="${top.concat(low).join(' ')}"/>`;
};
const waves = {
  kick: l => shape(l, 1.83, (x, i) => i % 2 ? 13.5 : 6),
  tick: l => shape(l, 1.5, (x, i) => i % 2 ? (i % 30 === 11 ? 9 : 5) : 1.5),
  crash: l => shape(l, .5, x => 7 * Math.exp(-x / 3) + 5 * Math.exp(-x / 9)),
  hit: l => shape(l, .5, x => x < 1 ? 13 : 6 * (1 - x / 11)),
  star: l => shape(l, .5, x => 7 * Math.exp(-Math.abs(x - 11) / 2) + 2 * Math.exp(-Math.abs(x - 11) / 7)),
  rise: l => shape(l, 1, (x, i, w) => { const p = w * .72; return x < p ? 12 * Math.pow(x / p, 2.2) : 12 - 6 * Math.pow((x - p) / (w - p), 2); }),
  vm: l => shape(l, 1, (x, i) => 14 * Math.exp(-x / 9) * (i % 2 ? .65 : 1)),
  loop: l => shape(l, 1, x => x % 22 > 19 ? 13 : 7 + rnd() * 4),
  block: l => shape(l, 1, () => 13),
  noise: l => shape(l, 1, (x, i) => i % 2 ? 13 : 9),
  ramp: l => shape(l, 1.5, (x, i, w) => (5 + 8 * x / w) * (i % 2 && x < w * .5 ? .6 : 1)),
  pop: l => shape(l, .5, x => 6 * Math.exp(-x / 3)),
  drop: l => shape(l, 1, x => 14 * Math.exp(-Math.pow(x / 20, 2))),
  grow: l => shape(l, 1, x => x > 4 ? x - 5 : 0),
  half: l => shape(l, .5, (x, i, w) => x > w / 2 ? 13 : 0),
  tail: l => shape(l, 1, (x, i, w) => 4 * (1 - x / w)) + `<path d="M0 20L11 5 ${l * BAR} 19" fill="none" stroke="#aebbc9" vector-effect="non-scaling-stroke"/>`,
  clicks: l => shape(l, .5, x => 14 * Math.exp(-x / .8)),
  pops: l => shape(l, .5, x => 6 * Math.exp(-x / 3.5))
};
const line = (d, c, w, fill) => `<path d="${d}" fill="${fill || 'none'}" stroke="${c}" stroke-width="${w}" vector-effect="non-scaling-stroke"/>`;
const curves = {
  vee: () => line('M0 2Q8 8 15 20L19 8', '#a5d5d2', 1.5),
  small: () => line('M0 0V15Q10 14 18 9 30 12 36 9 42 7 43 0', '#a5d5d2', 1.2, 'rgba(90,140,140,.2)'),
  long: () => `<path d="M0 15L22 11 44 15 66 10H78L88 1V28H0z" fill="rgba(90,140,140,.2)"/>` + line('M0 15L22 11 44 15 66 10H78L80 14Q85 10 88 1', '#93c8c4', 1.2),
  eq: () => { const y = b => (b - 1) * BAR; return line(`M0 25H${y(50)}Q${y(50.8)} 25 ${y(51)} 14H${y(51.7)}Q${y(51.9)} 16 ${y(52)} 25H${y(82)}Q${y(82.8)} 25 ${y(83)} 14H${y(83.7)}Q${y(83.9)} 16 ${y(84)} 25H${y(87)}`, '#d5dec0', 1.4, 'rgba(130,140,90,.15)'); },
  filter: () => {
    const b = n => (n - 1) * BAR;
    const d = `M0 1H${b(5)}Q${b(5.7)} 1 ${b(6)} 8V1H${b(9)}Q${b(9.7)} 2 ${b(10)} 10V1H${b(11)}V16Q${b(12)} 4 ${b(14)} 1Q${b(16)} 6 ${b(17)} 12V4L${b(19)} 11V1H${b(27.9)}V11Q${b(30)} 10 ${b(32)} 5Q${b(34)} 6 ${b(35.3)} 11V1H${b(41)}Q${b(42.5)} 6 ${b(43)} 16V2H${b(50)}Q${b(51.5)} 6 ${b(52)} 16V2H${b(60)}V20Q${b(62)} 19 ${b(64)} 9 ${b(65)} 8 ${b(66)} 2 ${b(67.5)} 4 ${b(68)} 13V1H${b(74)}Q${b(75.5)} 4 ${b(76)} 14V1H${b(82)}Q${b(83.5)} 4 ${b(84)} 11V1H${b(87)}`;
    return `<path d="${d}V28H0z" fill="rgba(120,80,100,.35)"/>` + line(d, '#cfaec0', 1.4);
  }
};

/* tone: header colour, drawing colour */
const tones = {
  tan: ['#6d6156', '#c7bfae'], moss: ['#6a6f55', '#b9bfa3'], mid: ['#4a5258', '#8fb59a'], grey: ['#4e5961', '#b5c3d0'],
  vec: ['#6c6b50', '#cbc9a6'], pink: ['#6e4d65', '#c9aec8'], brown: ['#6b544d', '#cab8ac'], purple: ['#5b4d6b', '#b9aecb'],
  teal: ['#41807d', '#a5d5d2'], green: ['#4d6a50', '#b0cdb1'], olive: ['#666c4b', '#bdc6a4'], lime: ['#6f7b49', '#d5dec0'],
  rose: ['#7b4b62', '#cfaec0'], steel: ['#4b5866', '#aebbc9'], ice: ['#45635f', '#b9d6d2']
};
const clips = [];
const add = (t, s, l, draw, tone, label = '', cls = '') => clips.push({t, s, l, draw, tone, label, cls});
const many = (t, starts, l, draw, tone, label, cls) => starts.forEach(s => add(t, s, l, draw, tone, label, cls));

many(1, [2, 11, 20, 36, 44, 68, 76], 8, 'kick', 'tan', '原乡鼓D..PM_2');
add(1, 28, 7, 'kick', 'tan', '原乡鼓..M_2'); add(1, 59, 4, 'drop', 'purple', 'UI..A#');
add(2, 2, 7, 'tick', 'moss', '原乡鼓H.._2'); add(2, 28, 7, 'tick', 'moss', '原乡鼓H.._2');
many(2, [11, 20, 36, 44, 68, 76], 8, 'tick', 'moss', '原乡鼓Hi..1_2');
add(2, 60, 4, 'pl', 'mid', '样..8', 'fade'); add(2, 64, 4, 'pl', 'mid', '样..18', 'fade');
many(3, [2, 6, 11, 15, 20, 24, 28, 36, 40, 44, 48, 68, 72, 76, 80], 4, 'bass', 'mid', 'bass'); add(3, 32, 3, 'bass', 'mid');
many(3, [52, 53, 54, 55, 56, 57, 58, 59], 1, 'clicks', 'ice', '', 'dim');
[[60.05, .2], [60.8, .3], [61.6, .1], [62, .2], [62.6, .8], [64, .2], [64.5, .2], [65, .4], [65.4, .9], [66.4, .8]].forEach(([s, l]) => add(3, s, l, 'noise', 'tan', '', 'cut'));
many(4, [2, 6, 11, 15, 20, 24, 28, 32, 36, 40, 44, 48, 68, 72, 76, 80], 4, 'pl', 'mid', 'pl');
many(4, [52, 56, 64], 4, 'pl', 'mid', 'piano'); add(4, 60, 4, 'pl', 'mid', 'pia..2');
many(5, [2, 6], 4, 'arp', 'mid', 'lread', 'fade'); many(5, [10, 19], 1, 'slow', 'mid', '', 'dim fade');
add(5, 11, 8, 'dots', 'mid', 'lead 2', 'fade'); add(5, 20, 16, 'soft', 'mid', 'lead 2 #2', 'fade');
many(5, [36, 40, 44, 48, 68, 72, 76, 80], 4, 'key', 'mid', 'key', 'fade'); add(5, 60, 8, 'dots', 'mid', 'lread #6');
many(6, [9, 18], 1.7, 'vee', 'teal'); add(6, 35, 8, 'dots', 'mid', 'lread #3'); add(6, 43, 9, 'dots', 'mid', 'lread #3');
many(6, [52, 60], 8, 'dots', 'mid', 'bell #2'); add(6, 68, 8, 'dots', 'mid', 'lread #4'); add(6, 76, 8, 'dots', 'mid', 'lread #5');
add(7, 1, 1, 'grow', 'grey', '', 'dim'); add(7, 9, 1, 'half', 'grey', '', 'dim'); add(7, 10, 1, 'noise', 'pink', '', 'dim');
add(7, 18, 1, 'half', 'grey', '', 'dim'); add(7, 19, 1, 'rise', 'brown', '', 'dim'); add(7, 20, 6, 'crash', 'vec', 'VEC4..sh 05');
add(7, 28, 8, 'soft', 'mid', 'bell'); add(7, 52, 15, 'slow', 'mid', '样式 19');
many(8, [2, 11, 28, 36, 44, 52, 60, 68, 76], 6.1, 'crash', 'vec', 'VEC4..sh 05');
add(8, 10, 1, 'grow', 'pink', '', 'dim'); add(8, 19, 2, 'hit', 'brown'); many(8, [35, 43, 75], 1, 'block', 'purple', '', 'dim');
add(8, 67, 1, 'noise', 'purple', '', 'dim'); add(8, 84, 3, 'crash', 'vec');
many(9, [1, 9, 18, 27, 35, 43, 51, 59, 75, 83], 3.2, 'star', 'pink', '..H', 'h');
add(9, 64, 3, 'rise', 'olive'); add(9, 67, 2, 'hit', 'brown');
many(10, [11, 13, 15, 17], 2, 'loop', 'brown'); add(10, 19, 3.2, 'star', 'pink', '..H', 'h');
add(10, 52, 8, 'tail', 'steel', 'MCY..气氛(长)'); for (let s = 60; s < 84; s += 2) add(10, s, 2, 'loop', 'brown');
add(11, 10, 1, 'hit', 'brown'); add(11, 11, 4.2, 'small', 'teal', 'Pa..率'); add(11, 35, 2, 'hit', 'grey');
add(11, 60, 8, 'long', 'teal', 'Param...d 7 freq'); many(11, [68, 76], 4, 'vm', 'green', 'VM..4'); many(11, [73, 81], 3, 'rise', 'olive');
many(12, [7, 16, 25, 32, 41, 57], 3, 'rise', 'olive'); many(12, [11, 20, 28, 36, 44], 4, 'vm', 'green', 'VM..4');
add(12, 60, 7, 'ramp', 'brown', 'VEDM L..ill 27'); many(12, [68, 76], 2, 'pop', 'green');
many(13, [2, 11, 20, 28, 36, 44, 52], 2, 'pop', 'green');
[[60, 1], [61, 1], [62, 1], [63, 1], [64, 1.2], [65.2, .5], [65.7, .5], [66.2, .8]].forEach(([s, l]) => add(13, s, l, 'pops', 'green'));
add(13, 67, 3.2, 'star', 'pink', '..H', 'h');
add(14, 1, 86, 'eq', 'lime', 'Param. EQ 2 – Master – Band 1 freq', 'wide'); add(15, 1, 86, 'filter', 'rose', 'Free Filter – lead – 频率', 'wide');

const drawClip = c => {
  const draw = notes[c.draw] || waves[c.draw] || curves[c.draw];
  const kind = notes[c.draw] ? 'c-mid' : waves[c.draw] ? 'c-aud' : 'c-aut';
  const [h, w] = tones[c.tone];
  return `<div class="clip ${c.cls}" style="--s:${c.s - 1};--l:${c.l};--h:${h};--w:${w}"><header>${c.cls === 'cut' ? '' : icon(kind)}<span>${text(c.label)}</span></header><svg viewBox="0 0 ${c.l * BAR} 28" preserveAspectRatio="none">${draw(c.l)}</svg></div>`;
};

const strips = {1: '#9fb3c2', 2: '#9fb3c2', 4: '#b9d3de', 5: '#b9d3de', 7: '#9fb3c2', 12: '#9fb3c2', 14: '#9fb3c2', 15: '#9fb3c2'};
let heads = '', lanes = '';
for (let t = 1; t <= 21; t++) {
  const short = t === 13 ? ' h40' : '';
  heads += `<div class="hd${short}${t === 1 ? ' cur' : ''}${t > 15 ? ' dim' : ''}"${strips[t] ? ` style="--k:${strips[t]}"` : ''}><div><label for="t${t}">Track ${t}${t < 21 ? '<small>...</small>' : ''}</label><input class="led" id="t${t}" type="checkbox"></div><i></i></div>`;
  lanes += `<div class="lane${short}">${clips.filter(c => c.t === t).map(drawClip).join('')}</div>`;
}
$('heads').innerHTML = heads;
$('lanes').innerHTML = lanes;
$('bars').innerHTML = '<i></i>'.repeat(102);
for (let b = 1; b <= 101; b += 4) $('ruler').innerHTML += `<span>${b}</span>`;

$('map').innerHTML = `<svg viewBox="0 0 102 18" preserveAspectRatio="none"><rect width="86" height="18" fill="#5a6a78"/>${clips.map(c => `<rect x="${c.s - 1}" y="${(c.t - 1) * 1.2}" width="${c.l}" height="1" fill="${tones[c.tone][1]}" opacity=".3"/>`).join('')}</svg>`;

$('patterns').innerHTML = ['kick', 'bass', 'lread', 'lread #3', 'lread #4', 'lread #6', 'lread #5', 'lread #2', 'pl', 'lead 2', 'lead 2 #2', 'bell', 'bell #2', 'key', 'piano', 'piano #2', '样式 18', '样式 19']
  .map(n => {
    const d = n === 'bass' ? 'slow' : /^pl|piano|样/.test(n) ? 'pl' : 'soft';
    return `<li class="${n === 'bass' ? 'cur' : n === 'pl' ? 'tag' : ''}"><svg class="n" viewBox="0 0 ${(d === 'soft' ? 12 : 4) * BAR} 28" preserveAspectRatio="none">${notes[d](d === 'soft' ? 12 : 4)}</svg>${icon('c-mid', 'i')}<span>${text(n)}</span></li>`;
  }).join('');

const pts = [];
for (let x = 0; x <= 84; x++) pts.push([x, 12 - 6 * Math.sin(x / 14) * (1 - x / 60) - rnd() * 6]);
$('scope').innerHTML = `<polygon points="${pts.map(([x, y]) => `${x},${(y + (x > 40 ? 1 : -3)).toFixed(1)}`).join(' ')} ${pts.reverse().map(([x, y]) => `${x},${(y + 10 + rnd() * 6).toFixed(1)}`).join(' ')}"/>`;
```
